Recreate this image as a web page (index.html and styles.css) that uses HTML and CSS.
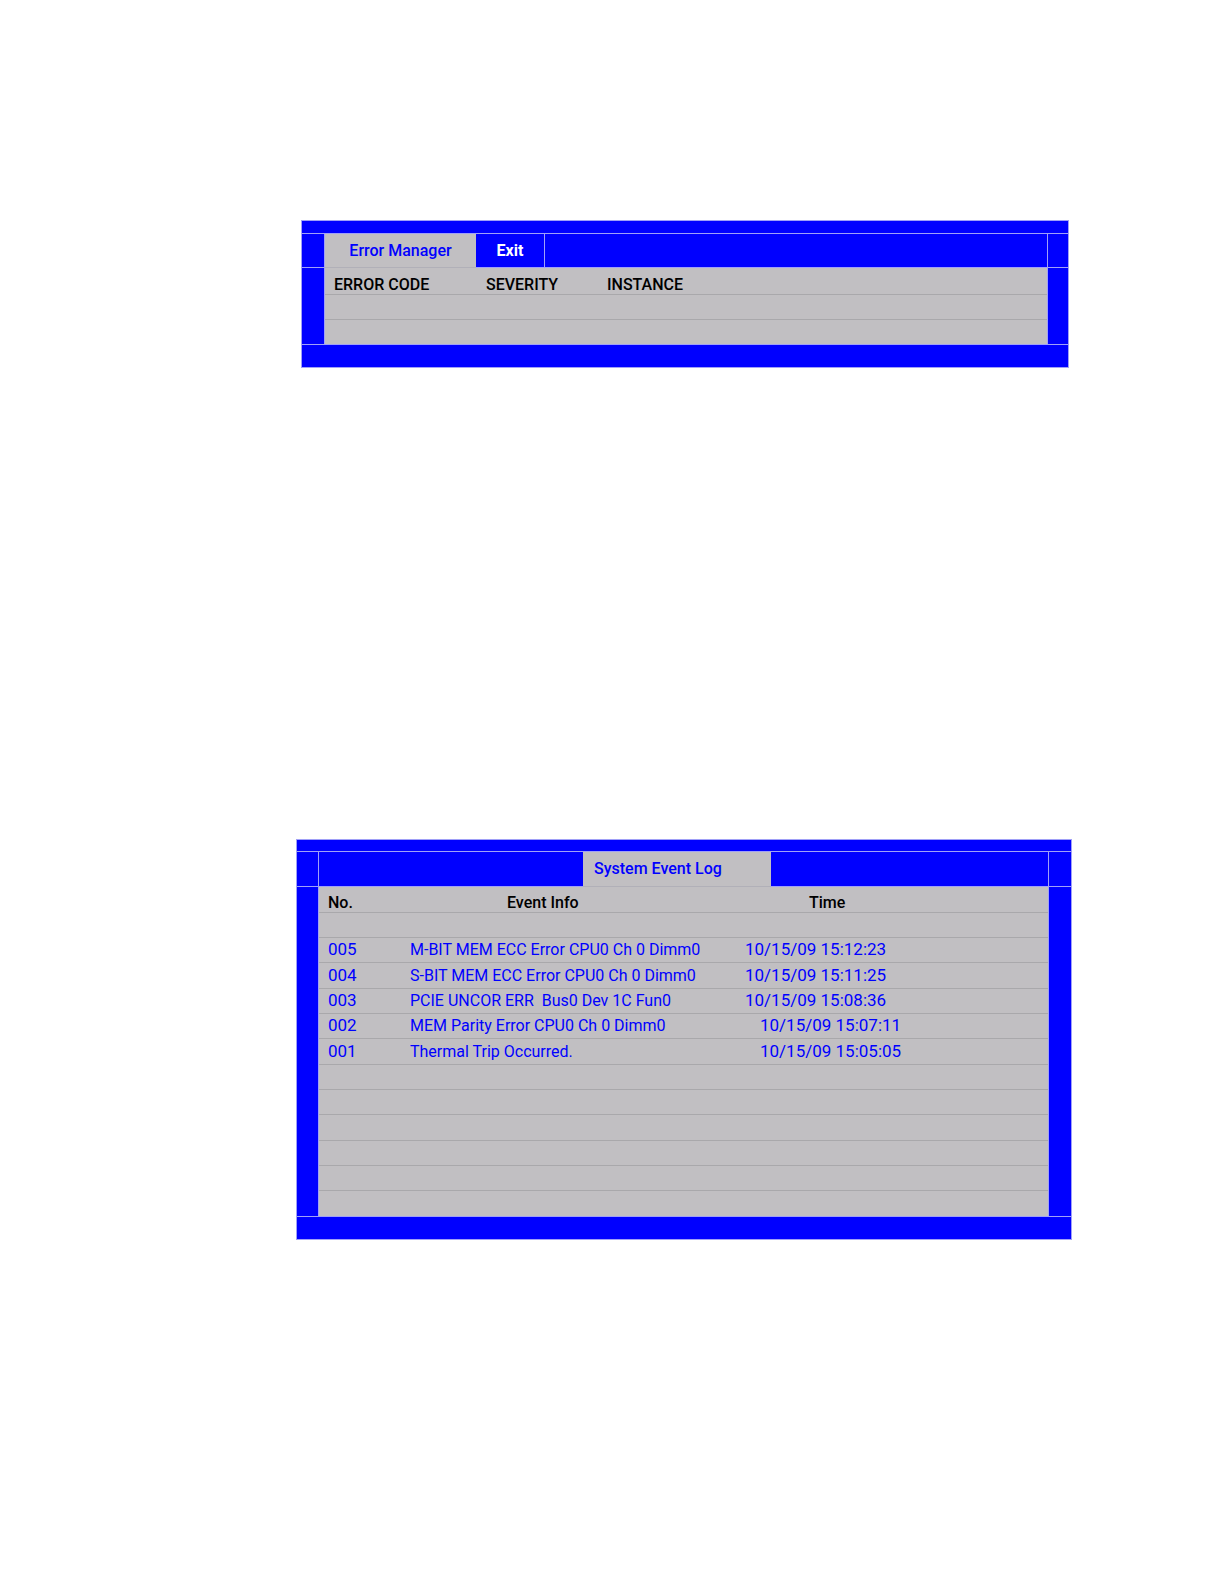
FILE: index.html
```html
<!DOCTYPE html>
<html lang="en">
<head>
  <meta charset="UTF-8">
  <meta name="viewport" content="width=device-width, initial-scale=1.0">
  <title>BIOS Setup</title>
  <link rel="stylesheet" href="styles.css">
</head>
<body>
  <main>
    <!-- Error Manager -->
    <section class="panel error-manager">
      <div class="panel-top"></div>
      <nav class="tab-bar">
        <button type="button" class="tab active">Error Manager</button>
        <button type="button" class="tab exit">Exit</button>
      </nav>
      <div class="panel-body">
        <table>
          <colgroup>
            <col class="col-code">
            <col class="col-severity">
            <col>
          </colgroup>
          <thead>
            <tr><th>ERROR CODE</th><th>SEVERITY</th><th>INSTANCE</th></tr>
          </thead>
          <tbody>
            <tr><td></td><td></td><td></td></tr>
            <tr><td></td><td></td><td></td></tr>
          </tbody>
        </table>
      </div>
      <div class="panel-bottom"></div>
    </section>

    <!-- System Event Log -->
    <section class="panel event-log">
      <div class="panel-top"></div>
      <nav class="tab-bar">
        <button type="button" class="tab active">System Event Log</button>
      </nav>
      <div class="panel-body">
        <table>
          <colgroup>
            <col class="col-no">
            <col class="col-info">
            <col>
          </colgroup>
          <thead>
            <tr><th>No.</th><th class="info">Event Info</th><th class="time">Time</th></tr>
          </thead>
          <tbody>
            <tr><td></td><td></td><td></td></tr>
            <tr><td>005</td><td class="message">M-BIT MEM ECC Error CPU0 Ch 0 Dimm0</td><td>10/15/09 15:12:23</td></tr>
            <tr><td>004</td><td class="message">S-BIT MEM ECC Error CPU0 Ch 0 Dimm0</td><td>10/15/09 15:11:25</td></tr>
            <tr><td>003</td><td class="message">PCIE UNCOR ERR&nbsp; Bus0 Dev 1C Fun0</td><td>10/15/09 15:08:36</td></tr>
            <tr><td>002</td><td class="message">MEM Parity Error CPU0 Ch 0 Dimm0</td><td class="indent">10/15/09 15:07:11</td></tr>
            <tr><td>001</td><td class="message">Thermal Trip Occurred.</td><td class="indent">10/15/09 15:05:05</td></tr>
            <tr><td></td><td></td><td></td></tr>
            <tr><td></td><td></td><td></td></tr>
            <tr><td></td><td></td><td></td></tr>
            <tr><td></td><td></td><td></td></tr>
            <tr><td></td><td></td><td></td></tr>
            <tr><td></td><td></td><td></td></tr>
          </tbody>
        </table>
      </div>
      <div class="panel-bottom"></div>
    </section>
  </main>
</body>
</html>
```
FILE: styles.css
```css
body {
  margin: 0;
  background-color: #ffffff;
  font-family: Roboto, sans-serif;
  font-size: 16px;
  line-height: 18px;
}
main {
  padding: 220px 152px 64px 296px;
}
.panel {
  background-color: #0000ff;
  border: 1px solid #a0a0f8;
}
.error-manager {
  margin: 0 3px 471px 5px;
}
.panel-top {
  height: 11px;
}
.error-manager .panel-top {
  height: 12px;
}
.tab-bar {
  display: flex;
  height: 34px;
  padding: 0 22px 0 21px;
  border: solid #a0a0f8;
  border-width: 1px 0;
}
.error-manager .tab-bar {
  height: 33px;
  padding: 0 20px 0 22px;
}
/* Vertical rules at both ends of the tab bar */
.tab-bar::before,
.tab-bar::after {
  content: "";
  width: 1px;
  background-color: #a0a0f8;
}
.tab-bar::after {
  margin-left: auto;
}
.tab {
  box-sizing: border-box;
  padding: 0;
  border: 0;
  background: none;
  color: #ffffff;
  font: inherit;
  font-weight: 500;
  cursor: pointer;
}
.tab.active {
  width: 151px;
  margin-bottom: -1px;
  border-bottom: 1px solid #b1b0b8;
  background-color: #c1bfc2;
  color: #0000ff;
}
.tab.exit {
  width: 69px;
  border-right: 1px solid #a0a0f8;
  font-weight: 700;
}
.event-log .tab.active {
  width: 188px;
  margin-left: 264px;
  padding-left: 11px;
  text-align: left;
}
.panel-body {
  padding: 0 22px 0 21px;
}
.error-manager .panel-body {
  padding: 0 20px 0 22px;
}
table {
  width: 100%;
  table-layout: fixed;
  border-spacing: 0;
  background-color: #c1bfc2;
  border: solid #a0a0f8;
  border-width: 0 1px;
  box-sizing: border-box;
}
th,
td {
  box-sizing: border-box;
  height: 25px;
  padding: 0 0 2px 9px;
  border-bottom: 1px solid #a9a8ab;
  text-align: left;
  white-space: nowrap;
}
th {
  height: 26px;
  padding-top: 7px;
  padding-bottom: 0;
  color: #000000;
  font-weight: 500;
}
.error-manager th {
  height: 27px;
}
td {
  color: #0000ff;
  font-size: 17px;
  font-weight: 400;
}
td.message {
  padding-bottom: 0;
  font-size: 16px;
}
/* Every third log row is one pixel taller */
.event-log tbody tr:nth-child(3n) td {
  height: 26px;
}
.col-code {
  width: 152px;
}
.col-severity {
  width: 121px;
}
.col-no {
  width: 82px;
}
.col-info {
  width: 335px;
}
.event-log .info {
  padding-left: 106px;
}
.event-log .time {
  padding-left: 73px;
}
.event-log .indent {
  padding-left: 24px;
}
.panel-bottom {
  height: 22px;
  margin-top: -1px;
  border-top: 1px solid #a0a0f8;
  position: relative;
}
```
